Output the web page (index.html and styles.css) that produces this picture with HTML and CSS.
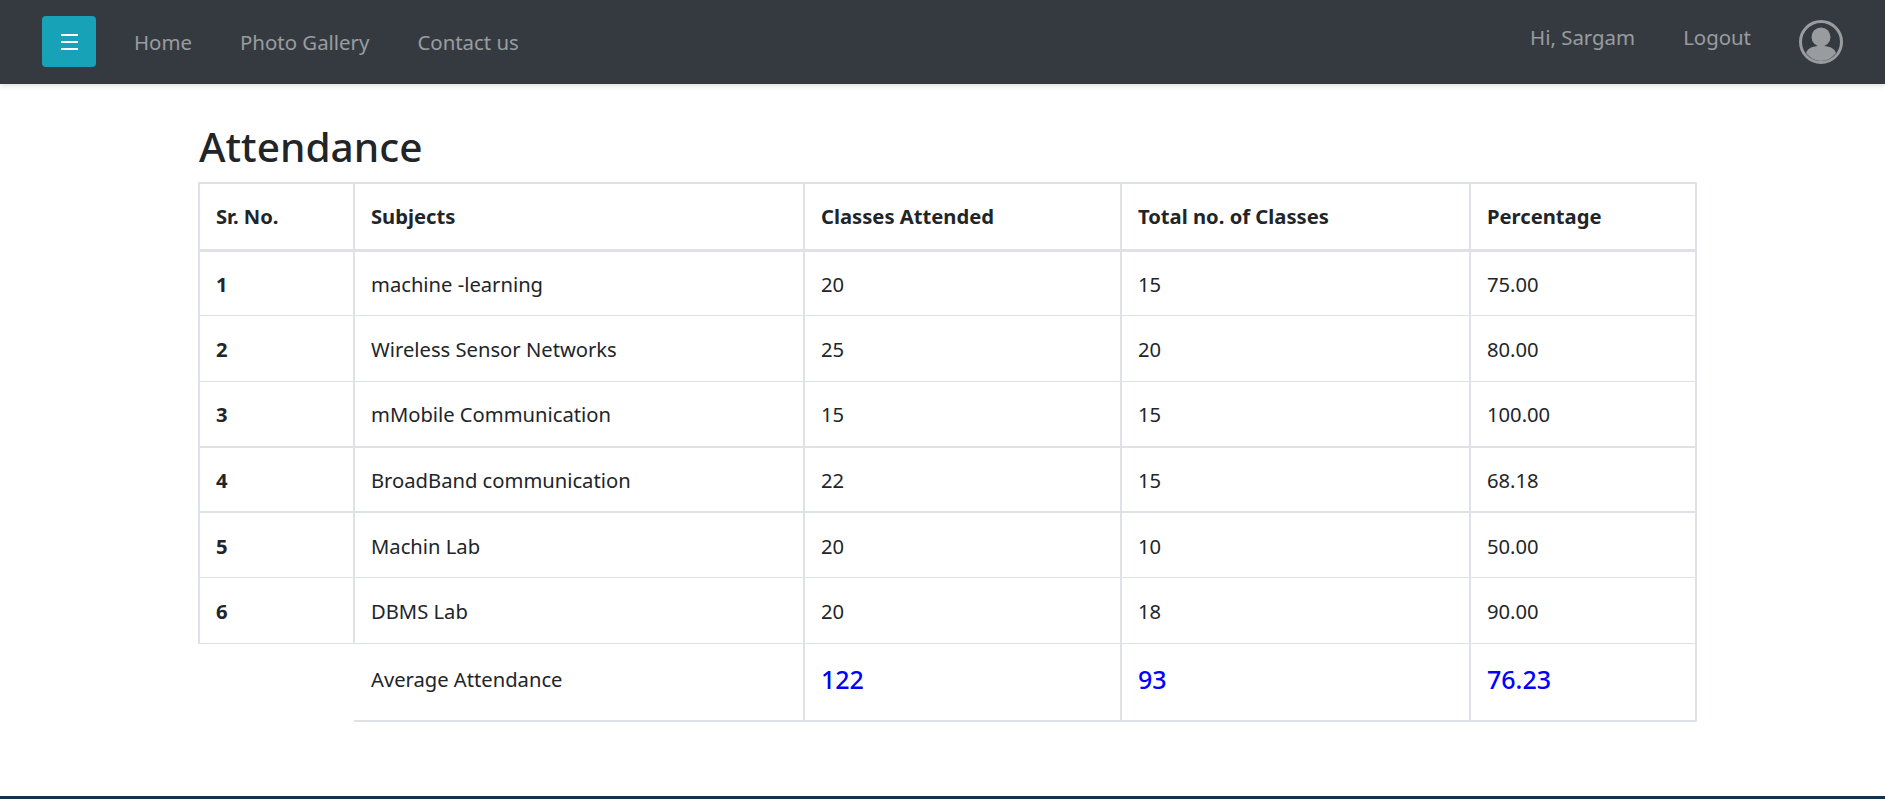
FILE: index.html
```html
<!DOCTYPE html>
<html lang="en">
<head>
   <meta charset="UTF-8">
   <meta name="viewport" content="width=device-width, initial-scale=1.0">
   <title>Attendance</title>
   <link rel="stylesheet" href="styles.css">
</head>
<body>

   <nav class="navbar">
       <button class="menu-btn">
           <svg class="menu-icon" viewBox="0 0 17 16">
               <path d="M0 1h17M0 8h17M0 15h17" stroke="#fff" stroke-width="2"/>
           </svg>
       </button>
       <a class="nav-link" href="#">Home</a>
       <a class="nav-link" href="#">Photo Gallery</a>
       <a class="nav-link" href="#">Contact us</a>
       <div class="nav-right">
           <a class="nav-link" href="#">Hi, Sargam</a>
           <a class="nav-link" href="#">Logout</a>
           <svg class="avatar" viewBox="0 0 44 44">
               <circle cx="22" cy="22" r="20.5" fill="none" stroke="#999c9f" stroke-width="3"/>
               <circle cx="22" cy="17" r="9.5" fill="#999c9f"/>
               <path d="M7 33c2-6 8-7 15-7s13 1 15 7c-4 5-9 8-15 8s-11-3-15-8z" fill="#999c9f"/>
           </svg>
       </div>
   </nav>

   <main class="content">
       <h1>Attendance</h1>
       <table class="attendance">
           <colgroup>
               <col class="col-sr">
               <col class="col-subject">
               <col class="col-attended">
               <col class="col-total">
               <col class="col-percent">
           </colgroup>
           <thead>
               <tr>
                   <th>Sr. No.</th>
                   <th>Subjects</th>
                   <th>Classes Attended</th>
                   <th>Total no. of Classes</th>
                   <th>Percentage</th>
               </tr>
           </thead>
           <tbody>
               <tr><th>1</th><td>machine -learning</td><td>20</td><td>15</td><td>75.00</td></tr>
               <tr><th>2</th><td>Wireless Sensor Networks</td><td>25</td><td>20</td><td>80.00</td></tr>
               <tr><th>3</th><td>mMobile Communication</td><td>15</td><td>15</td><td>100.00</td></tr>
               <tr class="thick"><th>4</th><td>BroadBand communication</td><td>22</td><td>15</td><td>68.18</td></tr>
               <tr class="thick"><th>5</th><td>Machin Lab</td><td>20</td><td>10</td><td>50.00</td></tr>
               <tr><th>6</th><td>DBMS Lab</td><td>20</td><td>18</td><td>90.00</td></tr>
               <tr class="summary">
                   <td class="empty"></td>
                   <td class="label">Average Attendance</td>
                   <td class="big">122</td>
                   <td class="big">93</td>
                   <td class="big">76.23</td>
               </tr>
           </tbody>
       </table>
   </main>

   <div class="footer-line"></div>

</body>
</html>
```

FILE: styles.css
```css
html, body {
    height: 100%;
}
body {
    margin: 0;
    display: flex;
    flex-direction: column;
    font-family: "Noto Sans", sans-serif;
    font-size: 20px;
    color: #212529;
    background-color: #fff;
}
a {
    text-decoration: none;
}
.navbar {
    display: flex;
    align-items: center;
    height: 84px;
    padding: 0 42px;
    background-color: #343a40;
    box-shadow: 0 2px 5px rgba(0, 0, 0, 0.12);
}
.menu-btn {
    display: flex;
    align-items: center;
    justify-content: center;
    width: 54px;
    height: 51px;
    margin: 0 14px 1px 0;
    padding: 0;
    border: none;
    border-radius: 4px;
    background-color: #17a2b8;
}
.menu-icon {
    width: 17px;
    height: 16px;
}
.nav-link {
    padding: 0 24px;
    color: rgba(255, 255, 255, 0.5);
    font-size: 20.4px;
}
.nav-right {
    display: flex;
    align-items: center;
    margin-left: auto;
}
.nav-right .nav-link {
    position: relative;
    top: -5px;
}
.avatar {
    width: 44px;
    height: 44px;
    margin-left: 24px;
}
.content {
    flex: 1;
    padding: 0 189px 0 198px;
}
h1 {
    margin: 33px 0 0;
    padding-left: 1px;
    height: 65px;
    font-size: 40.6px;
    font-weight: 500;
    line-height: 60px;
}
.attendance {
    width: 1497px;
    border-collapse: collapse;
    table-layout: fixed;
}
.col-sr { width: 155px; }
.col-subject { width: 450px; }
.col-attended { width: 317px; }
.col-total { width: 349px; }
.col-percent { width: 226px; }
.attendance th,
.attendance td {
    box-sizing: border-box;
    height: 65.6px;
    padding: 1px 16px 0;
    border: 2px solid #dee2e6;
    border-top-width: 1px;
    border-bottom-width: 1px;
    text-align: left;
    font-size: 20.2px;
}
.attendance thead th {
    height: 67px;
    padding-top: 0;
    border-top-width: 2px;
    border-bottom-width: 3px;
}
.attendance .thick th,
.attendance .thick td {
    border-top-width: 2px;
}
.attendance .summary td {
    height: 77px;
    padding-top: 0;
    padding-bottom: 6px;
    border-bottom-width: 2px;
}
.attendance .summary .empty {
    border-left: none;
    border-right: none;
    border-bottom: none;
}
.attendance .summary .label {
    padding-left: 17px;
    border-left: none;
}
.attendance .big {
    color: #00f;
    font-size: 25px;
    font-weight: 500;
}
.footer-line {
    height: 3px;
    background-color: #14304f;
}
```
